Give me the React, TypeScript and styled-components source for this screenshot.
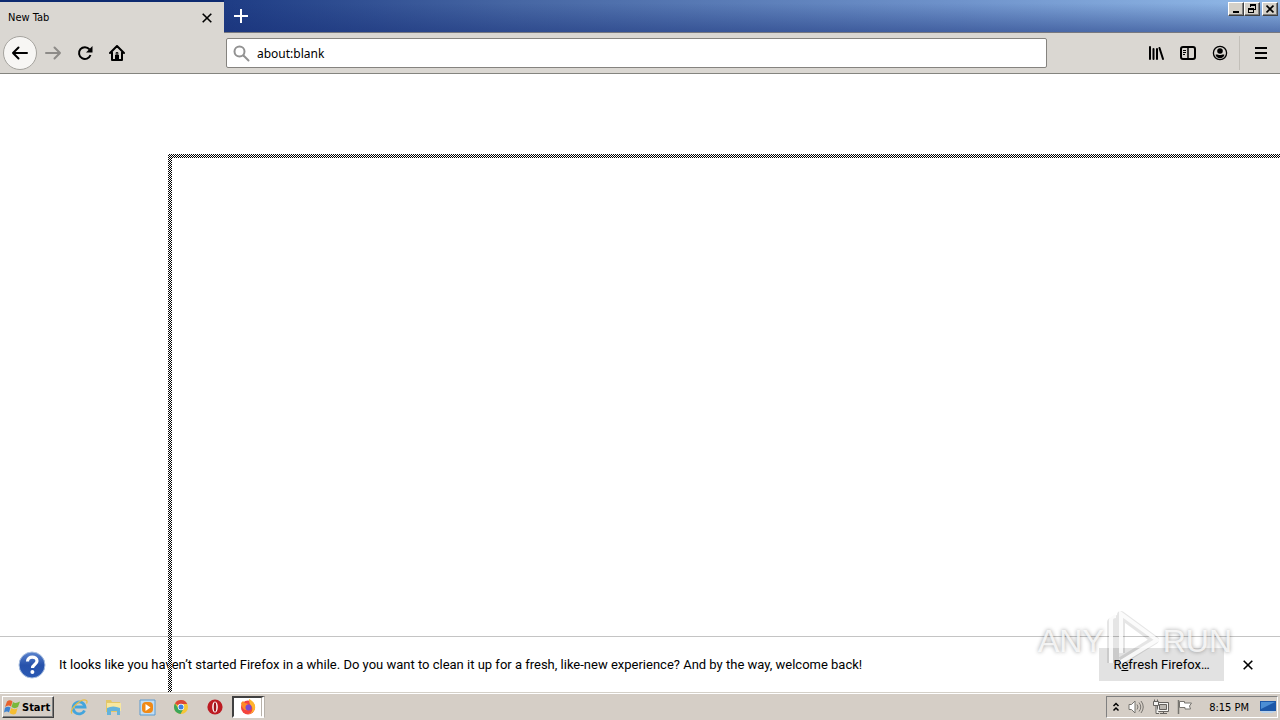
import React from "react";
import styled, { createGlobalStyle, css } from "styled-components";

const Global = createGlobalStyle`
  *, *::before, *::after { box-sizing: border-box; }
  body { margin: 0; background: #fff; color: #000; font-family: "DejaVu Sans Condensed", "Noto Sans", sans-serif; }
  button, input { font-family: inherit; color: inherit; margin: 0; }
  svg { display: block; flex: none; }
`;

const Desktop = styled.div`
  position: relative;
  display: flex;
  flex-direction: column;
  min-height: 100vh;
  overflow: hidden;
`;

const TabStrip = styled.header`
  display: flex;
  height: 33px;
  border-bottom: 1px solid #77787f;
  background:
    linear-gradient(180deg, rgba(24, 48, 120, 0) 10%, rgba(24, 48, 120, 0.5) 100%),
    linear-gradient(90deg, #16307a 0%, #1f3d85 18%, #4666a3 40%, #6f93cb 75%, #92bae8 100%);
`;

const Tab = styled.div`
  display: flex;
  align-items: center;
  justify-content: space-between;
  width: 224px;
  height: 33px;
  padding: 0 8px;
  border-top: 2px solid #0d2a70;
  background: #dad7d2;
  font-size: 11px;
`;

const FlatButton = styled.button<{ $w?: number }>`
  display: flex;
  align-items: center;
  justify-content: center;
  width: ${(p) => p.$w ?? 32}px;
  height: 32px;
  padding: 0;
  border: 0;
  background: none;
`;

const WindowButtons = styled.div`
  display: flex;
  gap: 2px;
  margin-left: auto;
  padding: 2px 2px 0 0;
`;

const Pair = styled.div`
  display: flex;
`;

const Caption = styled.button`
  display: flex;
  align-items: center;
  justify-content: center;
  width: 16px;
  height: 14px;
  padding: 0;
  border: 1px solid;
  border-color: #fff #404040 #404040 #fff;
  background: #d4d0c8;
  box-shadow: inset -1px -1px 0 #808080;
`;

const Toolbar = styled.nav`
  display: flex;
  align-items: center;
  height: 41px;
  border-bottom: 1px solid #84847f;
  background: #dad7d2;
`;

const ToolGroup = styled.div`
  display: flex;
  align-items: center;
  width: 226px;
  padding-left: 3px;
`;

const BackButton = styled(FlatButton)`
  width: 34px;
  height: 34px;
  border: 1px solid #a5a39e;
  border-radius: 50%;
  background: #f7f6f4;
`;

const AddressBar = styled.label`
  display: flex;
  align-items: center;
  gap: 7px;
  flex: 1;
  height: 30px;
  padding: 0 6px;
  border: 1px solid #85837f;
  border-radius: 2px;
  background: #fff;
`;

const AddressInput = styled.input`
  flex: 1;
  min-width: 0;
  padding: 0;
  border: 0;
  outline: 0;
  background: none;
  font-family: "Noto Sans", sans-serif;
  font-size: 12px;
`;

const RightTools = styled.div`
  display: flex;
  align-items: center;
  justify-content: flex-end;
  width: 233px;
  padding-right: 2px;
`;

const Divider = styled.span`
  width: 1px;
  height: 34px;
  margin: 0 4px 0 3px;
  background: #c2bfb9;
`;

const Page = styled.main`
  flex: 1;
  background: #fff;
`;

const Notice = styled.section`
  display: flex;
  align-items: center;
  height: 56px;
  padding: 0 8px 0 18px;
  border-top: 1px solid #c4c4c4;
  background: #fff;
  font-family: Roboto, sans-serif;
  font-size: 13px;
`;

const NoticeText = styled.p`
  flex: 1;
  margin: 0 0 0 13px;
  white-space: nowrap;
`;

const RefreshButton = styled.button`
  width: 125px;
  height: 33px;
  padding: 0;
  border: 0;
  background: #e2e2e2;
  font-size: 13px;
`;

const checker = css`
  background: repeating-conic-gradient(#000 0 25%, #fff 0 50%) 0 0 / 2px 2px;
`;

const DragOutline = styled.div`
  position: absolute;
  inset: 154px 0 28px 168px;
  pointer-events: none;
  &::before { content: ""; position: absolute; inset: 0 0 auto 0; height: 4px; ${checker} }
  &::after { content: ""; position: absolute; inset: 0 auto 0 0; width: 4px; ${checker} }
`;

const Watermark = styled.div`
  position: absolute;
  right: 48px;
  bottom: 47px;
  display: flex;
  align-items: center;
  justify-content: space-between;
  width: 194px;
  height: 64px;
  color: rgba(255, 255, 255, 0.8);
  font: 32px "Liberation Sans", sans-serif;
  text-shadow: 0 0 4px rgba(0, 0, 0, 0.4);
  pointer-events: none;
`;

const Taskbar = styled.footer`
  display: flex;
  align-items: center;
  height: 28px;
  padding: 1px 2px 0;
  border-top: 1px solid #d4d0c8;
  box-shadow: inset 0 1px 0 #fff;
  background: #d5cec6;
`;

const StartButton = styled.button`
  display: flex;
  align-items: center;
  gap: 1px;
  width: 52px;
  height: 22px;
  padding: 0 1px;
  border: 1px solid;
  border-color: #fff #404040 #404040 #fff;
  background: #d5cec6;
  box-shadow: inset -1px -1px 0 #808080;
  font-size: 11px;
  font-weight: 700;
`;

const QuickLaunch = styled.div`
  display: flex;
  padding-left: 8px;
`;

const TaskIcon = styled(FlatButton)`
  width: 34px;
  height: 22px;
`;

const ActiveTask = styled(TaskIcon)`
  width: 33px;
  border: 2px solid;
  border-color: #404040 #fff #fff #404040;
  background: #fff;
  border-right: 4px double #b8b2aa;
`;

const Tray = styled.div`
  display: flex;
  align-items: center;
  height: 22px;
  margin-left: auto;
  width: 172px;
  padding: 0 1px 0 5px;
  gap: 8px;
  border: 1px solid;
  border-color: #808080 #fff #fff #808080;
  font-size: 11px;
`;

const Clock = styled.time`
  margin: 0 3px 0 auto;
  white-space: nowrap;
`;

const Cross = ({ size = 10, w = 1.6 }: { size?: number; w?: number }) => (
  <svg width={size} height={size} viewBox="0 0 10 10" stroke="#000" strokeWidth={w} aria-hidden="true">
    <path d="M.7.7l8.6 8.6M9.3.7L.7 9.3" />
  </svg>
);

const Arrow = ({ color, flip }: { color: string; flip?: boolean }) => (
  <svg width="18" height="16" viewBox="0 0 18 16" fill="none" stroke={color} strokeWidth="2" strokeLinecap="round" strokeLinejoin="round" aria-hidden="true">
    <path d={flip ? "M2 8h14M10.500 2.500L16 8l-5.500 5.500" : "M16 8H2M7.500 2.500L2 8l5.500 5.500"} />
  </svg>
);

export default function App() {
  return (
    <Desktop>
      <Global />
      <TabStrip>
        <Tab>
          <span>New Tab</span>
          <FlatButton $w={18} aria-label="Close tab"><Cross /></FlatButton>
        </Tab>
        <FlatButton $w={34} aria-label="Open a new tab">
          <svg width="14" height="14" viewBox="0 0 14 14" stroke="#fff" strokeWidth="2"><path d="M7 0v14M0 7h14" /></svg>
        </FlatButton>
        <WindowButtons>
          <Pair>
            <Caption aria-label="Minimize">
              <svg width="10" height="10" viewBox="0 0 10 10"><path d="M2 7h6v2H2z" /></svg>
            </Caption>
            <Caption aria-label="Restore">
              <svg width="10" height="10" viewBox="0 0 10 10" fill="none" stroke="#000" shapeRendering="crispEdges">
                <path d="M3.5 3V.5h5v5H7M3 1.5h6M1.5 4.5h5v4h-5zM1 5.5h6" />
              </svg>
            </Caption>
          </Pair>
          <Caption aria-label="Close"><Cross size={8} w={2} /></Caption>
        </WindowButtons>
      </TabStrip>

      <Toolbar>
        <ToolGroup>
          <BackButton aria-label="Back"><Arrow color="#000" /></BackButton>
          <FlatButton aria-label="Forward"><Arrow color="#8d8b88" flip /></FlatButton>
          <FlatButton aria-label="Reload">
            <svg width="16" height="16" viewBox="0 0 16 16" fill="none" stroke="#000" strokeWidth="2">
              <path d="M13.500 10A5.900 5.900 0 1 1 12.500 4.300" /><path d="M15.500 1v6.500H9z" fill="#000" stroke="none" />
            </svg>
          </FlatButton>
          <FlatButton aria-label="Home">
            <svg width="16" height="16" viewBox="0 0 16 16" fill="none" stroke="#000" strokeWidth="2" strokeLinecap="round" strokeLinejoin="round">
              <path d="M1 8l7-7 7 7M3 7.500V15h10V7.500" /><path d="M6 15v-5h4v5z" fill="#000" stroke="none" /><path d="M7.200 10V7.500h1.600V14" strokeWidth="1" />
            </svg>
          </FlatButton>
        </ToolGroup>
        <AddressBar>
          <svg width="17" height="17" viewBox="0 0 17 17" fill="none" stroke="#929292" strokeWidth="2" strokeLinecap="round">
            <circle cx="6.500" cy="6.500" r="5" /><path d="M10.500 10.500l5 5" />
          </svg>
          <AddressInput aria-label="Search or enter address" defaultValue="about:blank" />
        </AddressBar>
        <RightTools>
          <FlatButton aria-label="Library">
            <svg width="16" height="16" viewBox="0 0 16 16" stroke="#000" strokeWidth="2" strokeLinecap="round"><path d="M2 2v12M5.500 4v10M9 4v10M11.500 3l3.500 11" /></svg>
          </FlatButton>
          <FlatButton aria-label="Sidebars">
            <svg width="16" height="16" viewBox="0 0 16 16" fill="none" stroke="#000" strokeWidth="2"><rect x="1" y="2" width="14" height="12" rx="2" /><path d="M8 2v12" strokeWidth="1.500" /><path d="M3 5.500h3M3 7.500h3M3 9.500h2" strokeWidth="1" /></svg>
          </FlatButton>
          <FlatButton aria-label="Account">
            <svg width="16" height="16" viewBox="0 0 16 16"><circle cx="8" cy="8" r="6.600" fill="none" stroke="#000" strokeWidth="1.300" /><circle cx="8" cy="6" r="2.800" /><path d="M3.500 9.800c1.500-.8 2.500.2 4.500.2s3-1 4.500-.2C12 12 10 13.200 8 13.200S4 12 3.500 9.800z" /></svg>
          </FlatButton>
          <Divider />
          <FlatButton $w={34} aria-label="Open menu">
            <svg width="12" height="12" viewBox="0 0 12 12" stroke="#000" strokeWidth="2"><path d="M0 1h12M0 6h12M0 11h12" /></svg>
          </FlatButton>
        </RightTools>
      </Toolbar>

      <Page />

      <Notice>
        <svg width="28" height="28" viewBox="0 0 28 28" aria-hidden="true">
          <defs><linearGradient id="help" x2="0" y2="1"><stop stopColor="#5c85cf" /><stop offset=".5" stopColor="#2752ab" /><stop offset="1" stopColor="#2a59b4" /></linearGradient></defs>
          <circle cx="14" cy="14" r="13" fill="url(#help)" stroke="#a9bfdf" />
          <path d="M9.500 10.500c0-6 9.500-5.500 9.500-.5 0 3.500-4.500 3.500-4.500 7" fill="none" stroke="#fff" strokeWidth="3.200" /><circle cx="14.400" cy="21" r="2" fill="#fff" />
        </svg>
        <NoticeText>It looks like you haven’t started Firefox in a while. Do you want to clean it up for a fresh, like-new experience? And by the way, welcome back!</NoticeText>
        <RefreshButton>R<u>e</u>fresh Firefox…</RefreshButton>
        <FlatButton aria-label="Dismiss" $w={48}><Cross /></FlatButton>
      </Notice>

      <Taskbar>
        <StartButton>
          <svg width="17" height="16" viewBox="0 0 17 16" aria-hidden="true">
            <path d="M3 2.500c2-2 4-1.500 5.500 0L7 7.500c-2-1.500-4-1-6 .5z" fill="#e8622c" /><path d="M9 3c2 1.500 4 1 7-.5L14 8c-2 1.500-4.500 1.500-6.500 0z" fill="#79b83c" />
            <path d="M1 8.800c2-1.500 4-1.500 5.500-.3L5 13.500c-1.500-1.500-3-1-5 0z" fill="#3f83d0" /><path d="M7.200 9c2 1.500 4 1.500 6.300.2L12 14.500c-2 1.500-4.500 1-6.500-.5z" fill="#f5bd31" />
          </svg>
          Start
        </StartButton>
        <QuickLaunch>
          <TaskIcon aria-label="Internet Explorer">
            <svg width="18" height="18" viewBox="0 0 18 18" fill="none"><path d="M14.500 12.500A6 6 0 1 1 15 9H5" stroke="#43a5dd" strokeWidth="2.800" /><path d="M2 15.500C-1 12 11-.5 16.500 2.500c1 1 .5 2 0 3" stroke="#e6bd48" strokeWidth="1.300" /></svg>
          </TaskIcon>
          <TaskIcon aria-label="File Explorer">
            <svg width="18" height="18" viewBox="0 0 18 18"><path d="M2 2h5l1 2h8v10H2z" fill="#e3c768" /><path d="M3 5h14v8H3z" fill="#f7e79f" /><path d="M3 10q6-3 13 0v7h-3v-4H7v4H3z" fill="#64b3db" /></svg>
          </TaskIcon>
          <TaskIcon aria-label="Media Player">
            <svg width="17" height="17" viewBox="0 0 17 17"><path d="M1 1h15v15H1z" fill="#c2ddf3" stroke="#5b9bd0" /><rect x="3" y="3" width="11" height="11" rx="4" fill="#f08a17" /><path d="M6.500 5l5 3.500-5 3.500z" fill="#fff" /></svg>
          </TaskIcon>
          <TaskIcon aria-label="Chrome">
            <svg width="14" height="14" viewBox="0 0 14 14"><circle cx="7" cy="7" r="7" fill="#f6c636" /><path d="M7 7L1 3.400A7 7 0 0 1 13.200 4H7z" fill="#dc4738" /><path d="M1 3.400A7 7 0 0 0 6.500 14L9.600 8.500 7 7 4.400 8.500z" fill="#3ba65a" /><circle cx="7" cy="7" r="3.200" fill="#fff" /><circle cx="7" cy="7" r="2.500" fill="#3f80e2" /></svg>
          </TaskIcon>
          <TaskIcon aria-label="Opera">
            <svg width="16" height="16" viewBox="0 0 16 16"><circle cx="8" cy="8" r="7.600" fill="#bd1b22" /><ellipse cx="8" cy="8" rx="2.800" ry="5.600" fill="#fff" /><ellipse cx="8" cy="8" rx="1.300" ry="4.800" fill="#9f1219" /></svg>
          </TaskIcon>
          <ActiveTask aria-label="Firefox">
            <svg width="16" height="16" viewBox="0 0 16 16"><circle cx="8" cy="8.500" r="7" fill="#f4443e" /><path d="M9 0c4 2 7 5 6 10-1 3-4 5-7 5 4-1 5-4 4-7-1-2-3-3-3-8z" fill="#ffb52e" /><path d="M1 4l2-2 2 2 3 1-2 3 2 3c-4 1-6-2-7-7z" fill="#ff8a25" /><circle cx="8.500" cy="8.500" r="3" fill="#7a4bd1" /></svg>
          </ActiveTask>
        </QuickLaunch>
        <Tray>
          <svg width="8" height="10" viewBox="0 0 8 10" fill="none" stroke="#000" strokeWidth="1.500"><path d="M1.500 4L4 1.500 6.500 4M1.500 8.500L4 6l2.500 2.500" /></svg>
          <svg width="17" height="16" viewBox="0 0 17 16" fill="#fff" stroke="#77746f"><path d="M1 5.500h2.500L7 2v12l-3.500-3.500H1z" /><path d="M9 5.500q2 2.500 0 5M11 3.500q3.500 4.500 0 9M13 2q4.500 6 0 12" fill="none" /></svg>
          <svg width="16" height="16" viewBox="0 0 16 16" fill="#f5f4f2" stroke="#65625e"><path d="M4.500 3.500h11v9h-11zM7 14.500h7M10.500 12v2" /><path d="M6.500 5.500h7v5h-7z" fill="#bbb7b1" /><path d="M.5 2.500h5v4h-5zM1.500.5v2M4.500.5v2M3 6.500v8h3" /></svg>
          <svg width="16" height="16" viewBox="0 0 16 16" fill="#fff" stroke="#77746f"><path d="M1.500 1v14" strokeWidth="1.500" /><path d="M2.500 2.500h5V4h7l-2 3 1 3H8V8.500H2.500z" /></svg>
          <Clock>8:15 PM</Clock>
          <svg width="16" height="14" viewBox="0 0 16 14"><path d="M0 1h16v10H0z" fill="#1d58a8" /><path d="M1 2h14L1 9z" fill="#4c8ed4" /><path d="M0 11h16l-4 2H2z" fill="#b9d1e9" /></svg>
        </Tray>
      </Taskbar>

      <DragOutline />
      <Watermark>
        <span>ANY</span>
        <svg width="56" height="64" viewBox="0 0 56 64" fill="none">
          <path d="M6 54V13l4-3v44M16 44V6l34 25-34 21" stroke="rgba(0,0,0,.1)" strokeWidth="8" strokeLinejoin="round" />
          <path d="M6 54V11q0-4 5-4M16 44V5l36 26-36 22" stroke="#fff" strokeOpacity=".85" strokeWidth="4" />
        </svg>
        <span>RUN</span>
      </Watermark>
    </Desktop>
  );
}
